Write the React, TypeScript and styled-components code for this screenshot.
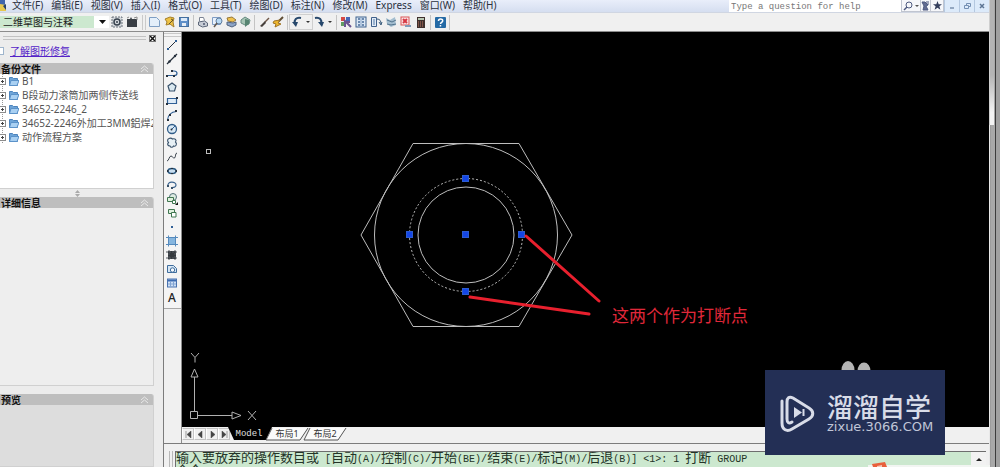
import React from "react";
import styled, { createGlobalStyle } from "styled-components";

const ui = `"Noto Sans", "Noto Sans CJK SC", sans-serif`;
const mono = `"Liberation Mono", "Noto Sans CJK SC", monospace`;

const Global = createGlobalStyle`
  *, *::before, *::after { box-sizing: border-box; }
  body { margin: 0; overflow: hidden; background: #a6a6a6; }
  button, select, input { font: inherit; color: inherit; border: 0; padding: 0; margin: 0; background: none; border-radius: 0; }
  h2 { margin: 0; }
  svg { display: block; flex: none; }
`;

const Screen = styled.div`
  position: relative;
  display: flex;
  height: 100vh;
  font: 10px/12px ${ui};
  color: #2b3140;
`;

const Window = styled.div`
  flex: 1;
  min-width: 0;
  display: flex;
  flex-direction: column;
  background: #f0f0f0;
`;

const Frame = styled.div`
  width: 11px;
  background: linear-gradient(90deg, #e8e8e8 0 1px, #9c9c9c 1px 2px, #a8a8a8 2px 6px, #3c3c3c 6px 7px, #a0a0a0 7px);
  display: flex;
  flex-direction: column;
`;

const FrameLight = styled.div`
  width: 5px;
  height: 125px;
  background: linear-gradient(#b4b4b4 60%, #f4f4f4 90%);
  border-left: 1px solid #cfcfcf;
`;

const MenuBar = styled.header`
  flex: none;
  display: flex;
  height: 13px;
  background: linear-gradient(#e9eefa, #d5def0);
  border-bottom: 1px solid #d0d6e2;
`;

const Menus = styled.nav`
  flex: 1;
  display: flex;
  gap: 8px;
  padding-left: 4px;
`;

const MenuItem = styled.button`
  height: 11px;
  line-height: 11px;
  white-space: nowrap;
`;

const HelpBox = styled.input`
  width: 172px;
  height: 12px;
  padding: 1px 2px 0;
  background: #fff;
  font: 9px/11px ${mono};
  &::placeholder { color: #777; opacity: 1; }
`;

const InfoButtons = styled.div`
  display: flex;
  width: 43px;
  background: #f6f7fa;
  border: 1px solid #c0c5d0;
  border-top: 0;
`;

const InfoButton = styled.button<{ $w: number }>`
  width: ${(p) => p.$w}px;
  display: grid;
  place-items: center;
  & + & { border-left: 1px solid #c4c8d2; }
`;

const WindowButton = styled.button`
  width: 15px;
  display: grid;
  place-items: center;
  background: #dceafa;
  border-left: 1px solid #b4c8e0;
`;

const Toolbar = styled.div`
  flex: none;
  display: flex;
  align-items: center;
  height: 19px;
  background: #f0f0f0;
  border-bottom: 1px solid #8c8c8c;
`;

const Picker = styled.div`
  position: relative;
  width: 109px;
  margin-right: 1px;
  svg { position: absolute; right: 3px; top: 4px; pointer-events: none; }
`;

const WorkspaceSelect = styled.select`
  appearance: none;
  display: block;
  width: 100%;
  height: 12px;
  padding-left: 3px;
  line-height: 12px;
  color: #222;
  background: linear-gradient(90deg, #cce8cf 0 94px, #fff 94px);
`;

const Tools = styled.div<{ $gap: number }>`
  display: flex;
  gap: ${(p) => p.$gap}px;
`;

const ToolButton = styled.button`
  width: 14px;
  height: 14px;
`;

const Drop = styled.button`
  width: 8px;
  height: 14px;
  display: grid;
  place-items: center;
`;

const Split = styled.div<{ $boxed?: boolean }>`
  display: flex;
  outline: ${(p) => (p.$boxed ? "1px solid #cfcfcf" : "none")};
`;

const Sep = styled.i`
  width: 1px;
  height: 15px;
  margin: 0 2px;
  background: #c4c4c4;
`;

const Grip = styled.i`
  width: 4px;
  height: 15px;
  margin: 0 1px 0 3px;
  border: solid #cacaca;
  border-width: 0 1px;
`;

const Body = styled.div`
  flex: 1;
  min-height: 0;
  display: flex;
`;

const Palette = styled.aside`
  width: 163px;
  display: flex;
  flex-direction: column;
  padding-right: 9px;
  background: #ececec;
  overflow: hidden;
`;

const PaletteTop = styled.div`
  display: flex;
  align-items: center;
  height: 12px;
  gap: 3px;
  margin-right: -2px;
`;

const PaletteGrip = styled.i`
  flex: 1;
  height: 4px;
  margin-left: 3px;
  border: solid #c2c2c2;
  border-width: 1px 0;
`;

const CloseButton = styled.button`
  width: 7px;
  height: 7px;
  border: 1px solid #777;
  background: #fff;
  display: grid;
  place-items: center;
`;

const RepairRow = styled.div`
  height: 19px;
  display: flex;
  padding-bottom: 6px;
  align-items: center;
  gap: 6px;
  a { color: #5524c8; text-decoration: underline; }
`;

const SheetIcon = styled.i`
  width: 4px;
  height: 8px;
  border: 1px solid #9fb5cc;
  border-left: 0;
  background: #fff;
`;

const Section = styled.section<{ $grow?: boolean; $h?: number; $bg: string }>`
  flex: ${(p) => (p.$grow ? "1" : "none")};
  height: ${(p) => (p.$h ? `${p.$h}px` : "auto")};
  display: flex;
  flex-direction: column;
  border-right: 1px solid #d0d0d0;
  border-bottom: 1px solid #d0d0d0;
  border-radius: 0 3px 0 0;
  background: ${(p) => p.$bg};
  overflow: hidden;
`;

const SectionHead = styled.header`
  flex: none;
  display: flex;
  justify-content: space-between;
  align-items: center;
  height: 11px;
  padding: 0 4px 0 1px;
  background: #bebebe;
  h2 { font: bold 10px/12px ${ui}; color: #111; }
`;

const Tree = styled.ul`
  list-style: none;
  margin: 0;
  padding: 0;
  color: #555;
`;

const TreeItem = styled.li`
  display: flex;
  align-items: center;
  gap: 3px;
  height: 14px;
  white-space: nowrap;
`;

const Splitter = styled.div`
  flex: none;
  height: 8px;
  display: grid;
  place-items: center;
`;

const Main = styled.main`
  flex: 1;
  min-width: 0;
  display: flex;
  flex-direction: column;
  border-left: 1px solid #7c7c7c;
`;

const Work = styled.div`
  flex: 1;
  min-height: 0;
  display: flex;
`;

const DrawBar = styled.div`
  width: 18px;
  display: flex;
  flex-direction: column;
  align-items: center;
  border-right: 1px solid #8c8c8c;
`;

const DrawTools = styled.div`
  display: flex;
  flex-direction: column;
  align-items: center;
  width: 100%;
  padding: 6px 1px 4px 0;
  border-bottom: 1px solid #a8a8a8;
  background: linear-gradient(#f4f4f4 0 1px, #c8c8c8 1px 2px, #f4f4f4 2px 4px, #c8c8c8 4px 5px, #f4f4f4 5px);
`;

const Sheet = styled.div`
  flex: 1;
  min-width: 0;
  display: flex;
  flex-direction: column;
`;

const Canvas = styled.div`
  flex: 1;
  min-height: 0;
  background: #000;
  overflow: hidden;
`;

const Tabs = styled.div`
  flex: none;
  display: flex;
  height: 16px;
  padding: 1px 0 3px;
  background: #f0f0f0;
`;

const PageButton = styled.button`
  width: 12px;
  height: 12px;
  display: grid;
  place-items: center;
  border: 1px solid #c4c4c4;
  border-left-color: #fff;
`;

const TabButton = styled.button<{ $on?: boolean }>`
  position: relative;
  width: 38px;
  height: 12px;
  font: 9px/12px ${(p) => (p.$on ? mono : ui)};
  color: ${(p) => (p.$on ? "#e0e0e0" : "#333")};
  text-align: center;
  svg { position: absolute; left: 0; top: 0; overflow: visible; }
  span { position: relative; }
`;

const CommandArea = styled.div`
  flex: none;
  height: 24px;
  display: flex;
  padding: 7px 3px 0 0;
  border-top: 1px solid #7c7c7c;
  overflow: hidden;
`;

const CommandGrip = styled.i`
  width: 4px;
  margin: 0 2px 0 5px;
  border: solid #b8b8b8;
  border-width: 0 1px;
`;

const CommandText = styled.div`
  flex: 1;
  min-width: 0;
  border: solid #6e6e6e;
  border-width: 1px 0 0 1px;
  background: #cce8cf;
  color: #243428;
  font: 13px/13px ${mono};
  white-space: pre;
  overflow: hidden;
  p { margin: 0; height: 13px; }
  span { font-size: 10px; }
`;

const ScrollUp = styled.button`
  width: 15px;
  display: grid;
  justify-items: center;
  align-content: start;
  padding-top: 6px;
  border-top: 1px solid #6e6e6e;
  background: #f2f2f2;
`;

const Watermark = styled.div`
  position: absolute;
  right: 55px;
  bottom: 12px;
  width: 180px;
  height: 85px;
  display: flex;
  align-items: center;
  gap: 12px;
  padding-left: 15px;
  background: #232f55;
  color: #d8dce8;
`;

const Brand = styled.div`
  display: flex;
  flex-direction: column;
  strong { font: 500 26px/28px "Noto Sans CJK SC", sans-serif; }
  span { font: 13px/14px "DejaVu Sans", sans-serif; color: #c0c6d8; }
`;

const Corner = styled.svg`
  position: absolute;
  right: 10px;
  bottom: 0;
`;

const blue = "#2f5f96";
const dark = "#26303c";

const icons: Record<string, React.ReactNode> = {
  gear: (<><rect x="2" y="2" width="10" height="10" fill="#d4d8dc" stroke="#68707a" strokeDasharray="2 1" /><circle cx="7" cy="7" r="3" fill="none" stroke="#38424e" strokeWidth="1.5" /><circle cx="7" cy="7" r="1" fill="#38424e" /></>),
  home: (<><path d="M2 4h3l1-2 1 2h5v8H2z" fill="#3a3f45" /><path d="M2 3l2-1M9 3l3-1v3" stroke="#888" fill="none" /></>),
  new: (<path d="M2.500 2.500h7l3 3v6h-10z" fill="#e4effa" stroke="#7f9fc4" />),
  open: (<><path d="M3 4l5-2 4 1-1 4 1 5-4-3-4 1 1-3z" fill="#efc244" stroke="#a5802c" /><path d="M9 4l2 1-4 4" stroke="#5f5228" fill="none" /></>),
  save: (<><rect x="2.500" y="2.500" width="9" height="9" fill="#5f8fc8" stroke="#456f9f" /><path d="M4 3h6v3H4z" fill="#dbe9f8" /><path d="M5 8h4v3H5z" fill="#e8eef5" /></>),
  print: (<><path d="M3.500 6V2.500h4l1 3" fill="#fff" stroke="#7c8494" /><path d="M2.500 7l6-1 3 2v3l-5 1-4-2z" fill="#c7ccd5" stroke="#5c6678" /><circle cx="8" cy="9" r="1" fill="#4c566c" /></>),
  preview: (<><path d="M2.500 2.500h8v7h-8z" fill="#e8f1fc" stroke="#7f9dc5" /><circle cx="9" cy="6" r="3" fill="#b9daf5" stroke="#617e9f" /><path d="M7 8l-3 4" stroke="#645a52" strokeWidth="1.500" /></>),
  publish: (<><path d="M3 3l5-1 4 3-3 2-5-1z" fill="#f0c14c" stroke="#97793b" /><path d="M3 7l6 1 3-1v3l-4 2-5-2z" fill="#8da4c7" stroke="#52647f" /></>),
  dwf: (<><path d="M3 5l4-3 5 3-1 4-4 1-4-2z" fill="#a6c4b4" stroke="#648a80" /><path d="M7 4v8l4-3V5z" fill="#568471" /></>),
  brush: (<><path d="M12 3L8 7" stroke="#6f5748" strokeWidth="1.500" /><path d="M8 6l1 2-4 4-2-1z" fill="#46403c" /></>),
  block: (<><path d="M12 2L7 7" stroke="#604e36" strokeWidth="2" /><path d="M3 6l6-1-2 3 3 1-6 3 1-3-3-1z" fill="#f0b92e" stroke="#9f7427" /></>),
  undo: (<><path d="M11 3C6 2 4 5 5 8" fill="none" stroke="#27486c" strokeWidth="2" /><path d="M2 7h6l-2 5z" fill="#27486c" /></>),
  redo: (<><path d="M3 3c5-1 7 2 6 5" fill="none" stroke="#27486c" strokeWidth="2" /><path d="M6 7h6l-2 5z" fill="#27486c" /></>),
  props: (<><path d="M2 2h4v4H2z" fill="#d64a45" /><path d="M7 2h4v4H7z" fill="#4568b8" /><path d="M2 7h4v4H2z" fill="#5f9c63" /><path d="M5 5l7 7M6 12V7h5" stroke="#695490" strokeWidth="2" fill="none" /></>),
  center: (<><rect x="2" y="2" width="10" height="10" fill="#dce8f5" stroke="#3f638e" /><path d="M4 4h2M8 4h2M4 7h2M8 7h2M4 10h2M8 10h2" stroke="#476b98" strokeWidth="1.500" /><path d="M7 2v10" stroke="#86a4c6" /></>),
  palette: (<><path d="M2.500 2.500h5v9h-5z" fill="#e2ebf5" stroke="#40618b" /><path d="M4 5h2M4 7h2M4 9h2" stroke="#537ba8" /><path d="M8 4c3 0 4 2 4 5M10 7l2 3 1-3" stroke="#395b7c" fill="none" /></>),
  sheetset: (<><path d="M2 3l4 2 5-3 1 8-5 2-4-3z" fill="#a4bed0" /><path d="M3 5l5 2 4-2M3 9l4 1 5-1" stroke="#53748d" fill="none" /></>),
  markup: (<><rect x="2" y="2" width="8" height="8" fill="#fbe7e7" stroke="#da5556" /><path d="M4 4l4 4m0-4L4 8" stroke="#d63743" strokeWidth="2" /><path d="M6 10h6v2H6z" fill="#809bb9" /></>),
  calc: (<><rect x="3" y="2" width="8" height="11" fill="#3f302d" /><path d="M4 3h6v2H4z" fill="#b9c8b3" /><path d="M4 7h6M4 9h6M4 11h6" stroke="#c27866" strokeDasharray="1 1" /></>),
  help: (<><rect x="2" y="2" width="11" height="11" rx="1" fill="#256aa5" /><path d="M5.500 6C5.500 3.500 9.700 3.500 9.700 5.700 9.700 7.300 7.500 7.300 7.500 9" stroke="#fff" strokeWidth="1.500" fill="none" /><path d="M6.700 10h1.500v1.500H6.700z" fill="#fff" /></>),
  line: (<><path d="M3 11l8-8" stroke={dark} /><path d="M2 10h2v2H2zM10 2h2v2h-2z" fill={blue} /></>),
  xline: (<><path d="M2 12L12 2" stroke={dark} strokeWidth="1.300" /><circle cx="4.500" cy="9.500" r="1.200" fill={dark} /><circle cx="10" cy="4" r="1.200" fill={dark} /></>),
  pline: (<><path d="M2 9.500h7c4 0 4-4.500 0-4.500H7" fill="none" stroke={blue} strokeWidth="1.200" /><path d="M1 9h2v2H1zM8 9h2v2H8zM6 4h2v2H6z" fill={dark} /></>),
  polygon: (<path d="M7 3l4 3-1.500 5h-5L3 6z" fill="#d9e8f0" stroke="#38516a" strokeWidth="1.200" />),
  rect: (<><path d="M2.500 4.500h9v5h-9z" fill="#deebf7" stroke={blue} strokeWidth="1.200" /><path d="M1 9h2v2H1zM11 3h2v2h-2z" fill={dark} /></>),
  arc: (<><path d="M2.500 12C3 7 6 4 11.500 3.500" fill="none" stroke={blue} strokeWidth="1.200" /><path d="M2 11h2v2H2zM4 6h2v2H4zM10 2h2v2h-2z" fill={dark} /></>),
  circle: (<><circle cx="7" cy="7" r="4.500" fill="#d8e8f4" stroke="#305c88" strokeWidth="1.300" /><path d="M6.500 7.500L10 4" stroke={blue} /><circle cx="6.500" cy="7.500" r="1" fill={dark} /></>),
  cloud: (<path d="M4 2.500c2-1 3 0 3.500.500C10 2 12 4 10.500 6c2 2 .500 5-2 4-1 2-3 1.500-3.500 0-2.500 0-3-2-1.500-3.500C2 5 2.500 3 4 2.500z" fill="#e7f0f5" stroke="#38516a" strokeWidth="1.100" />),
  spline: (<path d="M2 11c2 0 2-5 4-5s2 3 3.500 2S10 3 12 3" fill="none" stroke="#39424c" />),
  ellipse: (<><ellipse cx="7" cy="7" rx="4" ry="2.500" fill="#c9def0" stroke="#285880" strokeWidth="1.400" /><path d="M2 6h1.500v2H2zM10.500 6H12v2h-1.500zM6 4h2v1H6zM6 9h2v1H6z" fill={dark} /></>),
  earc: (<><path d="M3 8c-1-5 8-5 8-1 0 2-2 2.500-4 2.500" fill="none" stroke="#3c648f" strokeWidth="1.200" /><path d="M2 7h2v2H2zM6 9h2v2H6z" fill="#38516a" /></>),
  insert: (<><circle cx="8" cy="5" r="3.500" fill="#dcebe2" stroke="#526f78" /><path d="M2.500 5.500h6v4h-6z" fill="#e0f0de" stroke="#3f7650" /><path d="M7.500 8.500h3v3h-3z" fill="#fff" stroke="#3f7650" /><path d="M13 13V10l-3 3z" fill="#111" /></>),
  make: (<><path d="M3.500 3.500h6v4h-6z" fill="#e0f0de" stroke="#3f7650" /><path d="M6.500 6.500h4.500v4.500H6.500z" fill="#fff" stroke="#3f7650" /></>),
  point: (<path d="M6 6h2v2H6z" fill={blue} />),
  hatch: (<><path d="M3.500 3.500h7v7h-7z" fill="#86b6df" stroke={blue} /><path d="M1 3.500h12M1 10.500h12M3.500 1.500v11M10.500 1.500v11" stroke="#568abc" /></>),
  gradient: (<><path d="M3 3h8v8H3z" fill="#34393e" /><path d="M1 4h12M1 10h12M4 2v10M10 2v10" stroke="#555b60" strokeDasharray="2 1" /></>),
  region: (<><path d="M2.500 3.500h6l3 3v4h-9z" fill="#d6e6f4" stroke="#3f6d9d" /><circle cx="7.500" cy="8" r="2.200" fill="#f4f8fc" stroke="#3f6d9d" /></>),
  table: (<><rect x="2.500" y="3" width="9" height="8" fill="#cfe0f5" stroke="#4972af" /><path d="M3 4.500h8" stroke="#3e6db2" strokeWidth="2" /><path d="M3 8h8M5.500 5v6M8.500 5v6" stroke="#83a5d3" /></>),
  text: (<text x="7" y="12" fontSize="12" fontFamily="Noto Sans" fontWeight="500" textAnchor="middle" fill="#222">A</text>),
};

const Icon = ({ name }: { name: string }) => (
  <svg width="14" height="14" viewBox="0 0 14 14" aria-hidden="true">{icons[name]}</svg>
);

const ToolSet = ({ names, gap = 0 }: { names: string[]; gap?: number }) => (
  <Tools $gap={gap}>
    {names.map((n) => (
      <ToolButton key={n} aria-label={n}><Icon name={n} /></ToolButton>
    ))}
  </Tools>
);

const SmallArrow = () => (
  <svg width="4" height="2" aria-hidden="true"><path d="M0 0h4L2 2z" fill="#333" /></svg>
);

const Collapse = () => (
  <svg width="9" height="8" aria-hidden="true"><path d="M1 4l3.500-3L8 4M1 7l3.500-3L8 7" fill="none" stroke="#e8e8e8" /></svg>
);

const Folder = () => (
  <svg width="19" height="14" aria-hidden="true">
    <path d="M2.500 0v14" stroke="#999" strokeDasharray="1 1" />
    <rect x="-.500" y="4.500" width="6" height="6" fill="#fff" stroke="#8c8c8c" />
    <path d="M1 7.500h3M2.500 6v3" stroke="#444" />
    <path d="M9.500 3.500h3l1 1h4v7h-8z" fill="#6da4d8" stroke="#4d84bd" />
    <path d="M11 6.500h8l-2 5H9.500z" fill="#a9d0f2" stroke="#5b92c9" />
  </svg>
);

const menus = ["文件(F)", "编辑(E)", "视图(V)", "插入(I)", "格式(O)", "工具(T)", "绘图(D)", "标注(N)", "修改(M)", "Express", "窗口(W)", "帮助(H)"];
const files = ["B1", "B段动力滚筒加两侧传送线", "34652-2246_2", "34652-2246外加工3MM鋁焊2", "动作流程方案"];
const drawTools = ["line", "xline", "pline", "polygon", "rect", "arc", "circle", "cloud", "spline", "ellipse", "earc", "insert", "make", "point", "hatch", "gradient", "region", "table", "text"];
const pagers = [
  ["first", "M1 0v7M6 0v7L2 3.500z"],
  ["previous", "M5 0v7L1 3.500z"],
  ["next", "M2 0v7l4-3.500z"],
  ["last", "M6 0v7M1 0v7l4-3.500z"],
];
const grips = [[466, 179], [410, 235], [466, 235], [522, 235], [466, 292]];

const Drawing = () => (
  <svg width="100%" height="100%" role="img" aria-label="六角螺母">
    <g transform="translate(-182 -32)" fill="none" stroke="#bdbdbd">
      <path d="M413 143.500h106l53 91.500-53 91.500H413L361 235z" />
      <circle cx="466" cy="235" r="91.500" />
      <circle cx="466" cy="235" r="48" />
      <circle cx="466" cy="235" r="56.500" strokeDasharray="2 2" />
      <rect x="206.500" y="149.500" width="4" height="4" />
      <g fill="#1446e6" stroke="#2c5cd0">
        {grips.map(([x, y]) => (
          <rect key={`${x}-${y}`} x={x - 3.5} y={y - 3.5} width="6" height="6" />
        ))}
      </g>
      <path d="M526 236l73 65M470 297l119 17" stroke="#e8202e" strokeWidth="3" strokeLinecap="round" />
      <text x="612" y="322" fill="#e0283a" stroke="none" fontSize="17" fontFamily="Noto Sans CJK SC">这两个作为打断点</text>
      <g stroke="#b0b0b0">
        <path d="M190.500 411.500h7v7h-7zM194.500 411V377M198 415.500h34M194.500 369l-3.500 8h7zM241 415.500l-9-3.500v7zM191 353l4 4.500 4-4.500M195 357.500v5M248 411l8 9M256 411l-8 9" />
      </g>
      <g fill="#b4b4b4" stroke="none">
        <ellipse cx="848" cy="370" rx="6.500" ry="9" />
        <ellipse cx="864" cy="371" rx="6.500" ry="8.500" />
      </g>
    </g>
  </svg>
);

export default function App() {
  return (
    <Screen>
      <Global />
      <Window>
        <MenuBar>
          <svg width="8" height="12" aria-hidden="true">
            <path d="M0 0h5v5H0z" fill="#3f65ad" />
            <path d="M0 4l6 1v6H0z" fill="#e7c84f" />
            <path d="M3 6l3-2v6z" fill="#25406c" />
          </svg>
          <Menus>
            {menus.map((m) => <MenuItem key={m}>{m}</MenuItem>)}
          </Menus>
          <HelpBox placeholder="Type a question for help" aria-label="Help search" />
          <InfoButtons>
            <InfoButton $w={18} aria-label="Search">
              <svg width="16" height="10"><circle cx="6" cy="4" r="3" fill="none" stroke="#4e5a80" /><path d="M4 6L1 9" stroke="#4e5a80" strokeWidth="1.500" /><path d="M12 4h4l-2 2z" fill="#555" /></svg>
            </InfoButton>
            <InfoButton $w={11} aria-label="Communication center">
              <svg width="9" height="10"><path d="M1 1h3l3 3-2 1 2 4H2l1-4zM5 1h3M6 3h2" fill="#626d92" stroke="#4e5a80" /></svg>
            </InfoButton>
            <InfoButton $w={13} aria-label="Favorites">
              <svg width="9" height="9"><path d="M4.500 0l1.200 3.200H9L6.400 5.300l1 3.500-2.900-2-2.900 2 1-3.500L0 3.200h3.300z" fill="#333e5c" /></svg>
            </InfoButton>
          </InfoButtons>
          <WindowButton aria-label="Minimize"><svg width="6" height="6"><path d="M1 5h4" stroke="#4a6488" /></svg></WindowButton>
          <WindowButton aria-label="Restore"><svg width="7" height="7"><path d="M2.500 2.500V.500h4v3h-2M.500 2.500h4v3h-4z" fill="none" stroke="#7590b4" /></svg></WindowButton>
          <WindowButton aria-label="Close"><svg width="6" height="6"><path d="M1 1l4 4m0-4L1 5" stroke="#5d7594" strokeWidth="1.500" /></svg></WindowButton>
        </MenuBar>

        <Toolbar>
          <Picker>
            <WorkspaceSelect aria-label="工作空间"><option>二维草图与注释</option></WorkspaceSelect>
            <svg width="7" height="4"><path d="M0 0h7L3.500 4z" fill="#111" /></svg>
          </Picker>
          <ToolSet names={["gear", "home"]} gap={1} />
          <Grip />
          <ToolSet names={["new", "open", "save"]} gap={1} />
          <Sep />
          <ToolSet names={["print", "preview", "publish", "dwf"]} />
          <Sep />
          <ToolSet names={["brush", "block"]} />
          <Sep />
          <Split $boxed><ToolButton aria-label="undo"><Icon name="undo" /></ToolButton><Drop aria-label="undo list"><SmallArrow /></Drop></Split>
          <Split><ToolButton aria-label="redo"><Icon name="redo" /></ToolButton><Drop aria-label="redo list"><SmallArrow /></Drop></Split>
          <Sep />
          <ToolSet names={["props", "center", "palette", "sheetset", "markup", "calc"]} gap={1} />
          <Sep />
          <ToolSet names={["help"]} />
          <Sep />
        </Toolbar>

        <Body>
          <Palette>
            <PaletteTop>
              <PaletteGrip />
              <CloseButton aria-label="Close palette"><svg width="5" height="5"><path d="M0 0l5 5M5 0L0 5" stroke="#111" strokeWidth="1.500" /></svg></CloseButton>
            </PaletteTop>
            <RepairRow><SheetIcon /><a href="#repair">了解图形修复</a></RepairRow>
            <Section $h={126} $bg="#fff">
              <SectionHead><h2>备份文件</h2><Collapse /></SectionHead>
              <Tree>
                {files.map((f) => <TreeItem key={f}><Folder />{f}</TreeItem>)}
              </Tree>
            </Section>
            <Splitter>
              <svg width="5" height="7"><path d="M0 3h5L2.500 0zM0 4h5L2.500 7z" fill="#aaa" /></svg>
            </Splitter>
            <Section $h={189} $bg="#eeeeee">
              <SectionHead><h2>详细信息</h2><Collapse /></SectionHead>
            </Section>
            <Splitter />
            <Section $grow $bg="#dddddd">
              <SectionHead><h2>预览</h2><Collapse /></SectionHead>
            </Section>
          </Palette>

          <Main>
            <Work>
              <DrawBar>
                <DrawTools>
                  {drawTools.map((n) => <ToolButton key={n} aria-label={n}><Icon name={n} /></ToolButton>)}
                </DrawTools>
              </DrawBar>
              <Sheet>
                <Canvas><Drawing /></Canvas>
                <Tabs>
                  {pagers.map(([label, d]) => (
                    <PageButton key={label} aria-label={label}>
                      <svg width="7" height="7"><path d={d} fill="#444" stroke="#444" strokeWidth="0.500" /></svg>
                    </PageButton>
                  ))}
                  <TabButton $on>
                    <svg width="38" height="12"><path d="M-2-1h44l-6 13H4z" fill="#000" /></svg>
                    <span>Model</span>
                  </TabButton>
                  {["布局1", "布局2"].map((t) => (
                    <TabButton key={t}>
                      <svg width="38" height="12"><path d="M4 0L-2 12h34l8-12" fill="#fafafa" stroke="#555" /></svg>
                      <span>{t}</span>
                    </TabButton>
                  ))}
                </Tabs>
              </Sheet>
            </Work>
            <CommandArea>
              <CommandGrip />
              <CommandText role="log">
                <p>输入要放弃的操作数目或<span> [</span>自动<span>(A)/</span>控制<span>(C)/</span>开始<span>(BE)/</span>结束<span>(E)/</span>标记<span>(M)/</span>后退<span>{"(B)] <1>: 1 "}</span>打断<span> GROUP</span></p>
                <p>命令:</p>
              </CommandText>
              <ScrollUp aria-label="Scroll up"><svg width="6" height="3"><path d="M0 3h6L3 0z" fill="#222" /></svg></ScrollUp>
            </CommandArea>
          </Main>
        </Body>
      </Window>
      <Frame><FrameLight /></Frame>
      <Corner width="122" height="5" aria-hidden="true">
        <path d="M0 3h122v2H0z" fill="#f2f5f2" />
        <path d="M4 2l13-2 2 5H5z" fill="#e8603c" />
        <path d="M9 4l5-1v2H9z" fill="#f6c8b8" />
      </Corner>
      <Watermark>
        <svg width="35" height="38" viewBox="0 0 35 38" fill="none" stroke="#d8dce8" strokeLinecap="round" aria-hidden="true">
          <path d="M2 7v22c0 7 5 9 10 6l17-10c5-3 5-8 0-11L13 4C9 2 7 4 7 8v17c0 4 2 5 5 3" strokeWidth="3" />
          <path d="M14 13v11l8-5.500z" fill="#d8dce8" stroke="none" />
          <path d="M23.500 15v7" strokeWidth="2" strokeLinecap="butt" />
        </svg>
        <Brand><strong>溜溜自学</strong><span>zixue.3066.COM</span></Brand>
      </Watermark>
    </Screen>
  );
}
